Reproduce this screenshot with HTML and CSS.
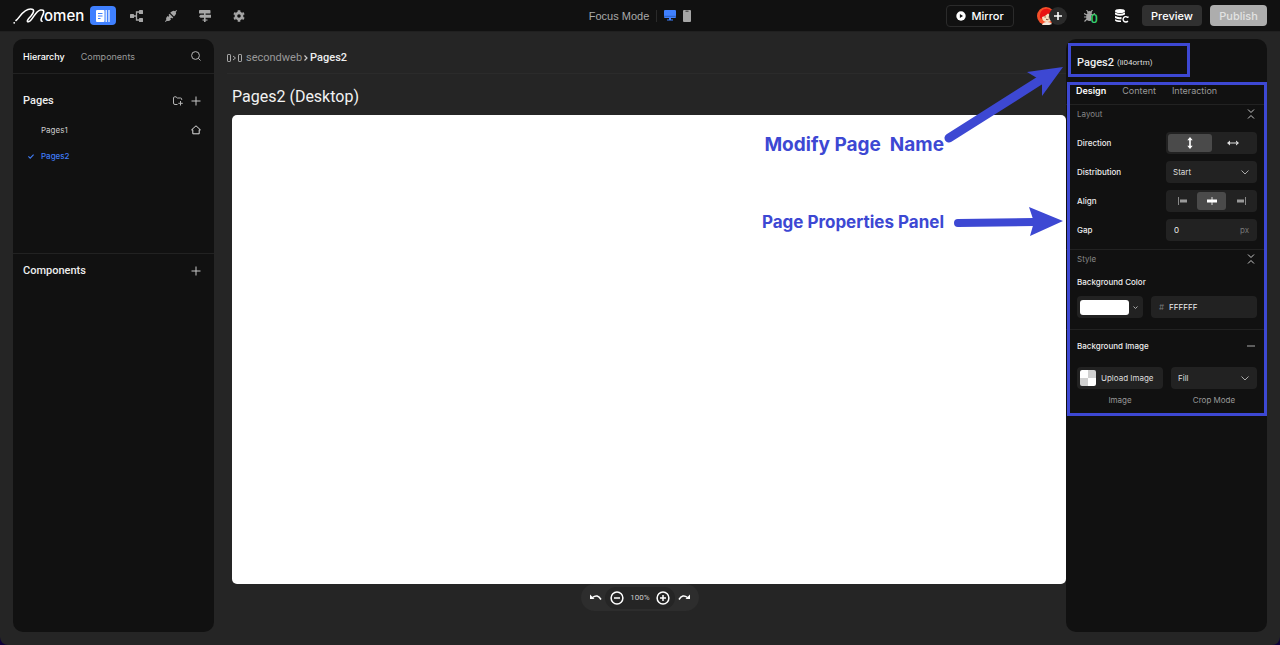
FILE: index.html
```
<!DOCTYPE html>
<html lang="en">
<head>
<meta charset="utf-8">
<title>Momen Editor</title>
<link rel="stylesheet" href="styles.css">
</head>
<body>
<div class="app">
  <header class="topbar">
    <div class="topbar-left">
      <a class="logo" href="#">
        <svg width="32" height="18" viewBox="0 0 32 18" fill="none" stroke="#fff" stroke-width="1.600" stroke-linecap="round" stroke-linejoin="round"><circle cx="1.200" cy="15.800" r=".9" fill="#fff" stroke="none"/><path d="M3 13.500C7 10.500 10 2 17.500 2C22.500 2 20.500 6 18 9C15 12 13 15 15.500 14.800C19.500 14 22 4 27.500 3C32 2.500 31 6 29.300 9C27.800 12 27.500 14 29 14.300"/></svg>
        <span class="logo-text">omen</span>
      </a>
      <nav class="tools" aria-label="Editor sections">
        <button class="tool tool-active" aria-label="Design">
          <svg width="14" height="12" viewBox="0 0 14 12"><rect x="0" y="0" width="8.500" height="12" rx="1" fill="#fff"/><path d="M2 3.500h4.500M2 6h4.500M2 8.500h2.500" stroke="#3f80ff" stroke-width="1.100"/><path d="M10.200 0v12M13 0v12" stroke="#fff" stroke-width="1.200"/></svg>
        </button>
        <button class="tool" aria-label="Flow">
          <svg width="14" height="12" viewBox="0 0 14 12" fill="#a6a6a6"><rect x="0" y="4" width="4" height="4" rx=".6"/><rect x="9" y="0" width="4" height="4" rx=".6"/><rect x="9" y="8" width="4" height="4" rx=".6"/><path d="M3 6h3.500M9 2H6.500v8H9" fill="none" stroke="#a6a6a6" stroke-width="1.300"/></svg>
        </button>
        <button class="tool" aria-label="Integrations">
          <svg width="12" height="12" viewBox="0 0 12 12" fill="#a6a6a6"><path d="M5.200 2.800 6.800 1.400Q8.800 .3 10.100 1.200L11.300 0l.7.700-1.200 1.200Q11.700 3.500 10.300 5L9 6.600zM4.600 3.700 8.300 7.400 7.200 8.500 6.200 7.700 5.300 8.600 6 9.500Q3.700 11.800 1.900 10.800L.700 12 0 11.300l1.200-1.200Q.300 8.200 2.500 6l.9.700.9-.9-.8-.900z"/></svg>
        </button>
        <button class="tool" aria-label="Data">
          <svg width="12" height="12" viewBox="0 0 12 12" fill="#a6a6a6"><rect x="0" y="0" width="11.500" height="3.600" rx=".7"/><path d="M1.500 4.800H12v3H1.500L0 6.300zM5 3h1.600v9H5z"/><path d="M3.500 9.500h5v1.100h-5z"/></svg>
        </button>
        <button class="tool" aria-label="Settings">
          <svg width="12" height="12" viewBox="0 0 12 12"><circle cx="6" cy="6" r="3.100" fill="none" stroke="#a6a6a6" stroke-width="2.600"/><path d="M6 .2v1.800M6 10v1.800M1 3.100l1.500.9M9.500 8l1.500.9M1 8.900 2.500 8M9.500 4 11 3.100" stroke="#a6a6a6" stroke-width="2.600"/></svg>
        </button>
      </nav>
    </div>
    <div class="topbar-center">
      <button class="focus-mode">Focus Mode</button>
      <span class="split"></span>
      <button class="device" aria-label="Desktop"><svg width="12" height="11" viewBox="0 0 12 11" fill="#3f80ff"><rect width="12" height="8" rx="1"/><path d="M5 8h2v1.500h2v1H3v-1h2z"/><path d="M0 6.300h12" stroke="#1c3c79" stroke-width=".5"/></svg></button>
      <button class="device" aria-label="Mobile"><svg width="8" height="12" viewBox="0 0 8 12"><rect width="8" height="12" rx="1" fill="#a6a6a6"/><path d="M2.500 1.200h3" stroke="#333" stroke-width="1"/></svg></button>
    </div>
    <div class="topbar-right">
      <button class="btn btn-mirror"><svg width="10" height="10" viewBox="0 0 10 10"><circle cx="5" cy="5" r="4.700" fill="#fff"/><path d="M3.900 3 7 5 3.900 7z" fill="#111"/></svg>Mirror</button>
      <div class="members">
        <svg class="avatar" width="18" height="18" viewBox="0 0 18 18"><circle cx="9" cy="9" r="9" fill="#f4502a"/><path d="M3 11C2 4 7 1 11 2q5 1 5 6H9l-4 4z" fill="#e81212"/><path d="M5 10q4-1 6-3.500 2 2 4.500 2 .5 6.500-5 6.500T5 10" fill="#f6dfc0"/><path d="M5 18q1-3 5-3t5 2q-4 2-10 1" fill="#f3e8dc"/><path d="M7.500 10h1.300M11.500 10h1.300M9 12.200q1.300 1 2.500 0" stroke="#5a2018" stroke-width=".8" fill="none"/></svg>
        <button class="add-member" aria-label="Invite"><svg width="8" height="8" viewBox="0 0 8 8"><path d="M4 0v8M0 4h8" stroke="#fff" stroke-width="1.600"/></svg></button>
      </div>
      <button class="status" aria-label="Issues"><svg width="12" height="12" viewBox="0 0 12 12"><g fill="#a6a6a6"><ellipse cx="5.500" cy="7" rx="3.300" ry="4"/><path d="M3 3.500a2.500 2.500 0 0 1 5 0z"/><path d="M2.500 0 4 2M8.500 0 7 2M0 3.500 3 5M11 3.500 8.500 5M0 7h8M.5 11.500 3 9" stroke="#a6a6a6" stroke-width="1.200"/></g><path d="M7 5.500h5V12H7z" fill="#111"/></svg><span class="issue-count">0</span></button>
      <button class="status" aria-label="Sync data"><svg width="14" height="14" viewBox="0 0 14 14"><ellipse cx="5" cy="2" rx="5" ry="2" fill="#fff"/><path d="M0 3.600q5 2.400 10 0v2Q5 8 0 5.600zM0 7q3.300 1.600 6.500 1v2.200Q3 10.500 0 9zM0 10.200q3 1.300 6 1.200v1.600Q1 13 0 11.500z" fill="#fff"/><path d="M12.700 8.400A2.700 2.700 0 1 0 12.900 12" fill="none" stroke="#fff" stroke-width="1.400"/><path d="M11.300 9.100h2.200V6.900z" fill="#fff"/></svg></button>
      <button class="btn btn-preview">Preview</button>
      <button class="btn btn-publish">Publish</button>
    </div>
  </header>

  <main class="workspace">
    <aside class="sidebar">
      <div class="side-tabs">
        <button class="side-tab side-tab-active">Hierarchy</button>
        <button class="side-tab">Components</button>
        <button class="icon-btn push" aria-label="Search"><svg width="10" height="10" viewBox="0 0 10 10" fill="none" stroke="#b5b5b5"><circle cx="4.500" cy="4.500" r="3.900"/><path d="M7.300 7.300 9.500 9.500"/></svg></button>
      </div>
      <section class="side-section pages">
        <div class="section-head">
          <h2>Pages</h2>
          <button class="icon-btn push" aria-label="New folder"><svg width="10" height="10" viewBox="0 0 10 10" fill="none" stroke="#b5b5b5"><path d="M4.500 8.500H2Q.500 8.500.500 7V2Q.500.800 1.700.800H3L4.300 2H7.500Q8.700 2 8.700 3.200V4M7.500 5v4.500M5.300 7.300h4.500"/></svg></button>
          <button class="icon-btn" aria-label="Add page"><svg width="10" height="10" viewBox="0 0 10 10"><path d="M5 .5v9M.5 5h9" stroke="#c8c8c8"/></svg></button>
        </div>
        <ul class="page-list">
          <li><a class="page" href="#"><span class="tick"></span>Pages1<svg class="push" width="10" height="10" viewBox="0 0 10 10" fill="none" stroke="#ddd" stroke-linejoin="round"><path d="M5 .8.600 4.800H1.800V8.800H8.200V4.800H9.400z"/></svg></a></li>
          <li><a class="page page-active" href="#"><span class="tick"><svg width="6" height="5" viewBox="0 0 6 5" fill="none" stroke="#3f7bf5" stroke-width="1.100"><path d="M.4 2.300 2.200 4.200 5.600.600"/></svg></span>Pages2</a></li>
        </ul>
      </section>
      <section class="side-section">
        <div class="section-head">
          <h2>Components</h2>
          <button class="icon-btn push" aria-label="Add component"><svg width="10" height="10" viewBox="0 0 10 10"><path d="M5 .5v9M.5 5h9" stroke="#c8c8c8"/></svg></button>
        </div>
      </section>
    </aside>

    <section class="stage">
      <nav class="crumbs" aria-label="Breadcrumb">
        <svg width="15" height="8" viewBox="0 0 15 8" fill="none" stroke="#aaa"><rect x=".5" y=".5" width="3" height="7" rx=".6"/><rect x="11.500" y=".5" width="3" height="7" rx=".6"/><path d="M6 2 8.500 4 6 6"/></svg>
        <a class="crumb" href="#">secondweb</a>
        <svg class="crumb-sep" width="4" height="6" viewBox="0 0 4 6" fill="none" stroke="#ccc" stroke-width="1.200"><path d="M.5.500 3 3 .5 5.500"/></svg>
        <a class="crumb crumb-active" href="#">Pages2</a>
      </nav>
      <h1 class="canvas-title">Pages2 (Desktop)</h1>
      <div class="canvas"></div>
      <div class="zoombar">
        <button class="icon-btn undo" aria-label="Undo"><svg width="12" height="7" viewBox="0 0 12 7"><path d="M0 .5 4.500 5H0z" fill="#fff"/><path d="M2.500 3.500Q7.500-.5 11 5.500" fill="none" stroke="#fff" stroke-width="1.500"/></svg></button>
        <div class="zoomer">
          <button class="icon-btn" aria-label="Zoom out"><svg width="14" height="14" viewBox="0 0 14 14" fill="none" stroke="#fff" stroke-width="1.500"><circle cx="7" cy="7" r="5.900"/><path d="M4 7h6"/></svg></button>
          <span class="zoom-value">100%</span>
          <button class="icon-btn" aria-label="Zoom in"><svg width="14" height="14" viewBox="0 0 14 14" fill="none" stroke="#fff" stroke-width="1.500"><circle cx="7" cy="7" r="5.900"/><path d="M4 7h6M7 4v6"/></svg></button>
        </div>
        <button class="icon-btn redo" aria-label="Redo"><svg width="12" height="7" viewBox="0 0 12 7"><path d="M12 .5 7.500 5H12z" fill="#fff"/><path d="M9.500 3.500Q4.500-.5 1 5.500" fill="none" stroke="#fff" stroke-width="1.500"/></svg></button>
      </div>
    </section>

    <aside class="inspector">
      <div class="inspector-title"><strong>Pages2</strong><span>(li04ortm)</span></div>
      <div class="prop-tabs">
        <button class="prop-tab prop-tab-active">Design</button>
        <button class="prop-tab">Content</button>
        <button class="prop-tab">Interaction</button>
      </div>
      <section class="group layout-group">
        <div class="group-head"><h3>Layout</h3><button class="icon-btn push" aria-label="Collapse layout"><svg width="8" height="10" viewBox="0 0 8 10" fill="none" stroke="#c8c8c8"><path d="M1 .5 4 3.500 7 .5M1 9.500 4 6.500 7 9.500"/></svg></button></div>
        <div class="row">
          <span class="label">Direction</span>
          <div class="segment control">
            <button class="seg seg-active" aria-label="Vertical"><svg width="8" height="12" viewBox="0 0 8 12" fill="#fff"><path d="M4 0 6.700 3.200H1.300zM4 12 1.300 8.800h5.400zM3.200 3h1.600v6H3.200z"/></svg></button>
            <button class="seg" aria-label="Horizontal"><svg width="12" height="6" viewBox="0 0 12 6" fill="#ddd"><path d="M0 3 3 .5v5zM12 3 9 .5v5zM2.500 2.400h7v1.200h-7z"/></svg></button>
          </div>
        </div>
        <div class="row">
          <label class="label" for="distribution">Distribution</label>
          <div class="select control">
            <select id="distribution"><option>Start</option><option>Center</option><option>End</option></select>
            <svg width="8" height="5" viewBox="0 0 8 5" fill="none" stroke="#aaa"><path d="M.5.500 4 4 7.500.500"/></svg>
          </div>
        </div>
        <div class="row">
          <span class="label">Align</span>
          <div class="segment control">
            <button class="seg" aria-label="Align left"><svg width="10" height="8" viewBox="0 0 10 8"><path d="M.5 0v8" stroke="#888"/><rect x="2" y="2.500" width="7" height="3" fill="#999"/></svg></button>
            <button class="seg seg-active" aria-label="Align center"><svg width="10" height="8" viewBox="0 0 10 8"><path d="M5 0v8" stroke="#ddd"/><rect x="0" y="2.500" width="10" height="3" fill="#fff"/></svg></button>
            <button class="seg" aria-label="Align right"><svg width="10" height="8" viewBox="0 0 10 8"><path d="M9.500 0v8" stroke="#888"/><rect x="1" y="2.500" width="7" height="3" fill="#999"/></svg></button>
          </div>
        </div>
        <div class="row">
          <label class="label" for="gap">Gap</label>
          <div class="field control"><input id="gap" type="text" value="0"><span class="unit">px</span></div>
        </div>
      </section>
      <section class="group style-group">
        <div class="group-head"><h3>Style</h3><button class="icon-btn push" aria-label="Collapse style"><svg width="8" height="10" viewBox="0 0 8 10" fill="none" stroke="#c8c8c8"><path d="M1 .5 4 3.500 7 .5M1 9.500 4 6.500 7 9.500"/></svg></button></div>
        <label class="label block-label" for="hex">Background Color</label>
        <div class="color-row">
          <button class="swatch-btn" aria-label="Pick color"><span class="swatch"></span><svg width="5" height="3" viewBox="0 0 5 3" fill="none" stroke="#aaa"><path d="M.5.500 2.500 2.500 4.500.500"/></svg></button>
          <div class="field hex"><span class="hash">#</span><input id="hex" type="text" value="FFFFFF"></div>
        </div>
      </section>
      <section class="group image-group">
        <div class="group-head"><h4 class="label">Background Image</h4><button class="icon-btn push" aria-label="Remove image"><svg width="8" height="2" viewBox="0 0 8 2"><path d="M0 1h8" stroke="#aaa"/></svg></button></div>
        <div class="image-row">
          <div class="captioned">
            <button class="upload"><span class="checker"></span>Upload Image</button>
            <span class="caption">Image</span>
          </div>
          <div class="captioned">
            <div class="select">
              <select id="crop"><option>Fill</option><option>Fit</option></select>
              <svg width="8" height="5" viewBox="0 0 8 5" fill="none" stroke="#aaa"><path d="M.5.500 4 4 7.500.500"/></svg>
            </div>
            <label class="caption" for="crop">Crop Mode</label>
          </div>
        </div>
      </section>

      <div class="mark mark-title"></div>
      <div class="mark mark-panel"></div>
      <div class="note note-name">Modify Page &nbsp;Name</div>
      <div class="note note-panel">Page Properties Panel</div>
      <svg class="arrows" width="130" height="180" viewBox="0 0 130 180" fill="#3d48d3" stroke="#3d48d3" stroke-linecap="round"><path d="M13 77 103 20" stroke-width="9"/><path d="M127 6 91 11 101 17 106 24 106 35z" stroke="none"/><path d="M22 162 98 161" stroke-width="8"/><path d="M127 160 93 146 98 161 94 175z" stroke="none"/></svg>
    </aside>
  </main>
</div>
</body>
</html>
```
FILE: styles.css
```
* { box-sizing: border-box; }

body {
  margin: 0;
  background: #0e0038;
  font-family: Roboto, "Liberation Sans", sans-serif;
  color: #eee;
}

h1, h2, h3, h4, ul { margin: 0; padding: 0; font-weight: 400; }
ul { list-style: none; }
a { color: inherit; text-decoration: none; }
svg { display: block; flex: none; }

button, input, select {
  margin: 0;
  padding: 0;
  border: 0;
  background: none;
  color: inherit;
  font: inherit;
}

input { min-width: 0; width: 100%; }

.app {
  display: flex;
  flex-direction: column;
  min-height: 100vh;
  overflow: hidden;
  border-radius: 0 0 8px 8px;
  background: #252525;
}

/* Top bar */
.topbar {
  display: grid;
  grid-template-columns: 1fr auto 1fr;
  align-items: center;
  height: 32px;
  padding: 0 13px;
  background: #111;
  border-bottom: 1px solid #202020;
}

.topbar-left, .topbar-center, .topbar-right, .tools, .logo, .members {
  display: flex;
  align-items: center;
}

.logo-text {
  margin-left: -1px;
  font-family: Inter, sans-serif;
  font-size: 15px;
  font-weight: 500;
  line-height: 16px;
  color: #fff;
}

.tools { gap: 8px; margin-left: 6px; }

.tool {
  display: flex;
  align-items: center;
  justify-content: center;
  width: 26px;
  height: 19px;
  border-radius: 4px;
}

.tool-active { background: #3f80ff; }

.topbar-center { gap: 7px; color: #aaa; }
.focus-mode { font-family: "Liberation Sans", sans-serif; font-size: 11px; line-height: 16px; }
.split { width: 1px; height: 12px; background: #2a2a2a; }

.topbar-right { justify-content: flex-end; }

.btn {
  display: flex;
  align-items: center;
  justify-content: center;
  gap: 6px;
  height: 21px;
  border-radius: 4px;
  font-family: Inter, sans-serif;
  font-size: 11px;
  font-weight: 500;
  color: #fff;
}

.btn-mirror { width: 68px; height: 22px; border: 1px solid #2b2b2b; }
.btn-preview { width: 60px; margin-left: 13px; background: #303030; }
.btn-publish { width: 57px; margin-left: 8px; background: #adadad; color: #e2e2e2; }

.members { margin-left: 23px; }
.add-member {
  display: flex;
  align-items: center;
  justify-content: center;
  width: 18px;
  height: 18px;
  margin-left: -6px;
  border-radius: 50%;
  background: #2a2a2a;
}

.status { display: flex; align-items: center; margin-left: 17px; }
.issue-count {
  margin: 7px 0 0 -5px;
  font-size: 13px;
  font-weight: 500;
  line-height: 12px;
  color: #35d06f;
  z-index: 1;
}

/* Workspace */
.workspace {
  display: flex;
  flex: 1;
  padding: 7px 13px 13px;
}

.icon-btn { display: flex; align-items: center; }
.push { margin-left: auto; }

.sidebar, .inspector {
  flex: none;
  width: 201px;
  border-radius: 10px;
  background: #111;
}

.side-tabs {
  display: flex;
  align-items: center;
  gap: 16px;
  height: 35px;
  padding: 0 13px 0 10px;
  border-bottom: 1px solid #222;
  color: #999;
  font-family: Inter, sans-serif;
  font-size: 9px;
}

.side-tab-active { color: #fff; font-weight: 500; }

.side-section { padding: 8px 13px 0 10px; }
.pages { height: 180px; padding-top: 18px; border-bottom: 1px solid #222; }

.section-head { display: flex; align-items: center; gap: 8px; height: 18px; }
.section-head h2 { font-size: 11px; font-weight: 500; line-height: 18px; }

.page-list { margin-top: 7px; }
.page {
  display: flex;
  align-items: center;
  height: 26px;
  color: #ccc;
  font-family: Inter, sans-serif;
  font-size: 8px;
}
.page-active { color: #3f7bf5; font-weight: 500; }
.tick { width: 18px; padding-left: 5px; }

/* Stage */
.stage {
  display: flex;
  flex: 1;
  flex-direction: column;
  min-width: 0;
  padding-left: 13px;
}

.crumbs {
  display: flex;
  align-items: center;
  gap: 4px;
  height: 35px;
  padding-top: 3px;
  border-bottom: 1px solid #2b2b2b;
  color: #999;
  font-size: 11px;
}
.crumb-sep { margin: 0 -2px; }
.crumb-active { color: #eee; font-weight: 500; }

.canvas-title {
  padding: 11px 0 6px 5px;
  font-size: 16px;
  line-height: 24px;
  color: #f2f2f2;
}

.canvas {
  flex: 1;
  margin-left: 5px;
  border-radius: 5px;
  background: #fff;
}

.zoombar {
  display: flex;
  align-items: center;
  justify-content: space-between;
  align-self: center;
  width: 118px;
  height: 27px;
  margin: 0 13px 21px 0;
  padding: 0 9px;
  border-radius: 14px;
  background: #2d2d2d;
}
.zoomer {
  display: flex;
  align-items: center;
  justify-content: space-between;
  width: 70px;
  height: 22px;
  padding: 0 5px;
  border-radius: 11px;
  background: #252525;
}
.zoom-value { font-size: 8px; line-height: 12px; color: #ccc; }

/* Inspector */
.inspector { position: relative; font-family: Inter, "Liberation Sans", sans-serif; }

.inspector-title {
  display: flex;
  align-items: center;
  gap: 3px;
  height: 42px;
  padding: 4px 10px 0 11px;
  font-family: Roboto, sans-serif;
}
.inspector-title strong { font-size: 11px; font-weight: 500; }
.inspector-title span { font-size: 8px; color: #ddd; }

.prop-tabs {
  display: flex;
  align-items: center;
  gap: 16px;
  height: 24px;
  padding: 0 10px 5px;
  border-bottom: 1px solid #222;
  color: #999;
  font-size: 9px;
}
.prop-tab-active { color: #fff; font-weight: 600; }

.group { padding: 0 10px 0 11px; border-bottom: 1px solid #222; }
.group-head { display: flex; align-items: center; height: 18px; padding-right: 2px; }
.group-head h3 { font-size: 8px; color: #888; }
.label { font-size: 8px; font-weight: 500; color: #eee; }

.layout-group { height: 145px; }
.row {
  display: flex;
  align-items: center;
  justify-content: space-between;
  margin-top: 7px;
}
.layout-group .group-head + .row { margin-top: 9px; }
.control { width: 91px; }

.segment, .select, .field, .swatch-btn, .upload {
  height: 22px;
  border-radius: 4px;
  background: #222;
}
.segment { display: flex; padding: 2px; }
.seg {
  display: flex;
  flex: 1;
  align-items: center;
  justify-content: center;
  border-radius: 3px;
}
.seg-active { background: #4a4a4a; }

.select { display: grid; align-items: center; font-size: 8px; color: #ddd; }
.select > * { grid-area: 1 / 1; }
.select select {
  appearance: none;
  width: 100%;
  height: 22px;
  padding: 0 22px 0 7px;
}
.select svg { justify-self: end; margin-right: 8px; pointer-events: none; }

.field {
  display: flex;
  align-items: center;
  padding: 0 8px;
  font-size: 8px;
  color: #eee;
}
.unit, .hash { color: #777; }

.style-group { height: 80px; }
.block-label { display: block; margin-top: 8px; line-height: 12px; }
.color-row { display: flex; gap: 8px; margin-top: 8px; }
.swatch-btn {
  display: flex;
  align-items: center;
  gap: 4px;
  width: 66px;
  padding: 0 3px;
}
.swatch { width: 49px; height: 15px; border-radius: 3px; background: #fff; }
.hex { flex: 1; gap: 5px; }

.image-group { padding-top: 7px; border-bottom: 0; }
.image-row { display: grid; grid-template-columns: 1fr 1fr; gap: 8px; margin-top: 12px; }
.captioned { display: flex; flex-direction: column; gap: 5px; }
.upload {
  display: flex;
  align-items: center;
  gap: 5px;
  padding: 0 3px;
  color: #ddd;
  font-size: 8px;
}
.checker {
  width: 16px;
  height: 16px;
  border-radius: 2px;
  background: repeating-conic-gradient(#d0d0d0 0 25%, #fff 0 50%);
}
.caption { color: #999; font-size: 8px; line-height: 12px; text-align: center; }

/* Annotations over the editor */
.mark { position: absolute; border: 3px solid #3d48d3; pointer-events: none; }
.mark-title { top: 4px; left: 2px; width: 122px; height: 34px; }
.mark-panel { top: 43px; left: 1px; right: 0; height: 334px; }
.note {
  position: absolute;
  right: 323px;
  color: #3d48d3;
  font-weight: 700;
  white-space: nowrap;
}
.note-name { top: 94px; font-size: 19px; line-height: 24px; }
.note-panel { top: 171px; font-size: 17px; line-height: 24px; }
.arrows { position: absolute; top: 22px; left: -130px; pointer-events: none; }
```
